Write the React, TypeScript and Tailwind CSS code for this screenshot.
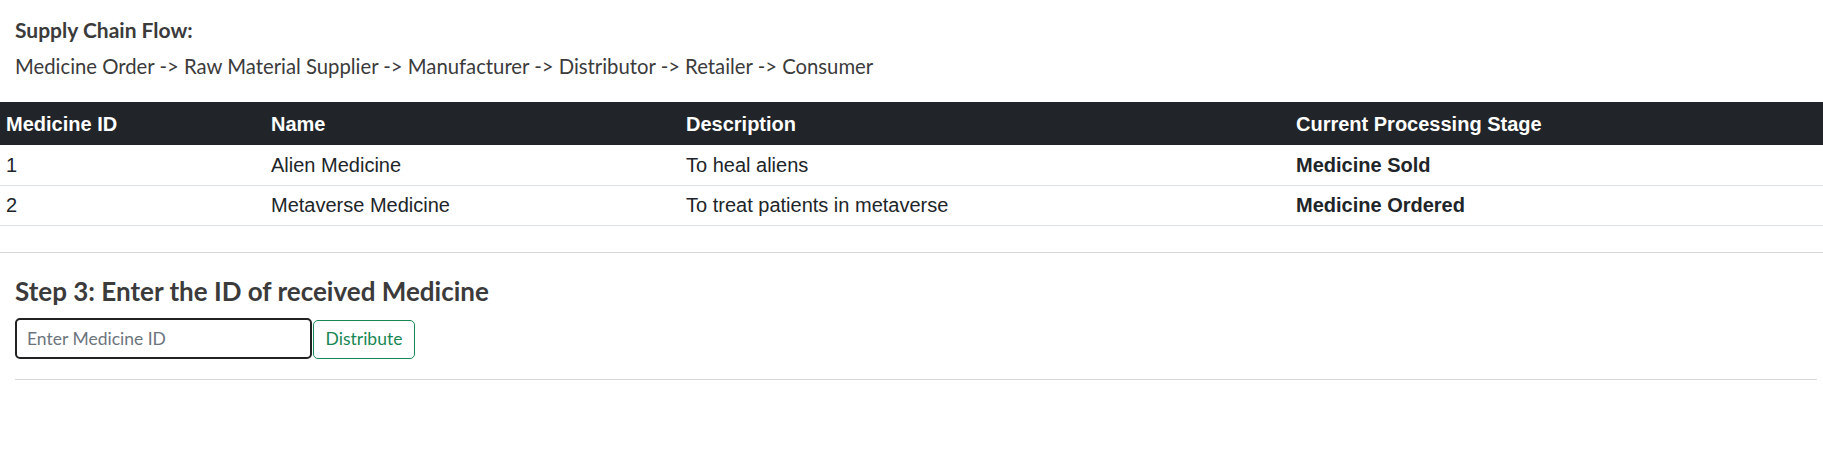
import React from 'react';

type Medicine = {
    id: number;
    name: string;
    description: string;
    stage: string;
};

const MEDICINES: Medicine[] = [
    { id: 1, name: 'Alien Medicine', description: 'To heal aliens', stage: 'Medicine Sold' },
    { id: 2, name: 'Metaverse Medicine', description: 'To treat patients in metaverse', stage: 'Medicine Ordered' },
];

const App: React.FC = () => {
    return (
        <div className="min-h-screen bg-white text-[#212529] font-['Liberation_Sans',Arial,sans-serif]">
            {/* Flow summary */}
            <div className="pt-[15px] px-[15px] font-['Lato','Noto_Sans',sans-serif] text-[20.3px] leading-[30px] text-[#3b3b3b]">
                <h6 className="font-bold text-[21px]">Supply Chain Flow:</h6>
                <p className="mt-[6px]">
                    Medicine Order -&gt; Raw Material Supplier -&gt; Manufacturer -&gt; Distributor -&gt; Retailer -&gt; Consumer
                </p>
            </div>

            {/* Table */}
            <table className="mt-[21px] w-full table-fixed border-collapse text-[20px] leading-[30px]">
                <colgroup>
                    <col className="w-[265px]" />
                    <col className="w-[415px]" />
                    <col className="w-[610px]" />
                    <col />
                </colgroup>
                <thead>
                    <tr className="h-[43px] bg-[#212529] text-white">
                        <th className="px-[6px] text-left font-bold">Medicine ID</th>
                        <th className="px-[6px] text-left font-bold">Name</th>
                        <th className="px-[6px] text-left font-bold">Description</th>
                        <th className="px-[6px] text-left font-bold">Current Processing Stage</th>
                    </tr>
                </thead>
                <tbody>
                    {MEDICINES.map((m) => (
                        <tr key={m.id} className="h-[40px] border-b border-[#dee2e6]">
                            <td className="px-[6px]">{m.id}</td>
                            <td className="px-[6px]">{m.name}</td>
                            <td className="px-[6px]">{m.description}</td>
                            <td className="px-[6px] font-bold">{m.stage}</td>
                        </tr>
                    ))}
                </tbody>
            </table>

            <hr className="mt-[26px] border-t border-[#d6d6d6]" />

            {/* Step 3 */}
            <div className="pl-[15px] pr-[6px] pt-[23px] font-['Lato','Noto_Sans',sans-serif]">
                <h5 className="text-[26px] leading-[30px] font-bold text-[#3b3b3b]">Step 3: Enter the ID of received Medicine</h5>
                <div className="mt-[12px] flex items-end">
                    <input
                        type="text"
                        placeholder="Enter Medicine ID"
                        className="h-[41px] w-[297px] rounded-[5px] border-2 border-[#222] bg-white px-[10px] text-[17.5px] outline-none placeholder:text-[#6c757d]"
                    />
                    <button className="ml-px h-[39px] w-[102px] rounded-[5px] border border-[#198754] bg-white text-[17.5px] text-[#198754]">
                        Distribute
                    </button>
                </div>
                <hr className="mt-[20px] border-t border-[#d6d6d6]" />
            </div>
        </div>
    );
};

export default App;
